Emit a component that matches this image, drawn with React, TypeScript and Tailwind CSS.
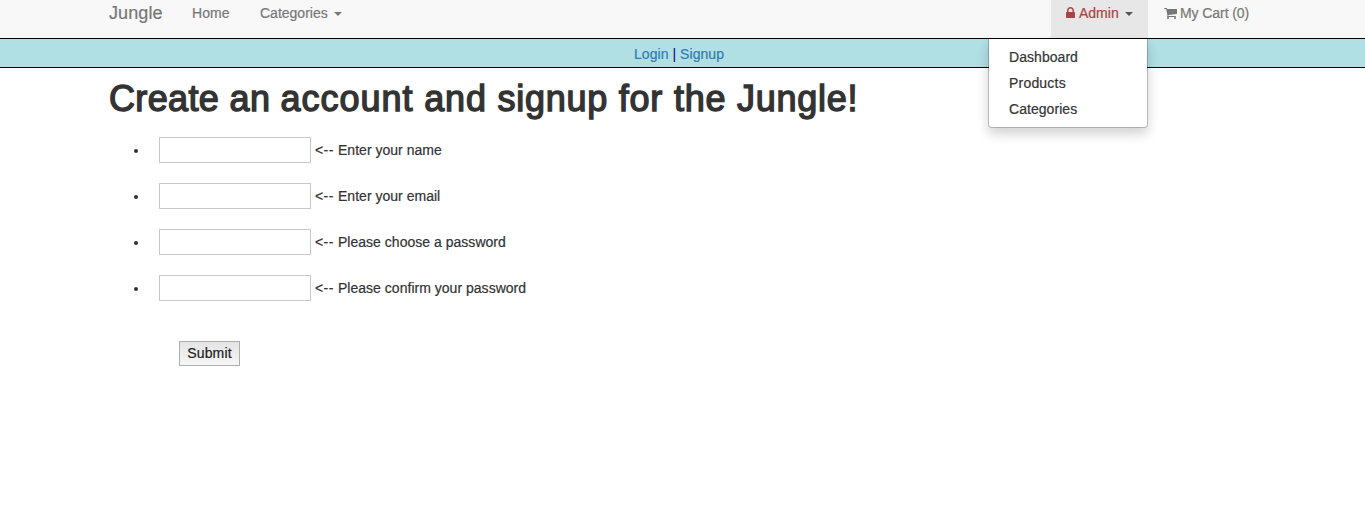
import React from 'react';

function Caret() {
  return (
    <span className="ml-[6px] mt-[2px] block h-0 w-0 border-x-4 border-t-4 border-x-transparent border-t-current" />
  );
}

function LockIcon() {
  return (
    <svg viewBox="320 0 1152 1792" className="mr-[3px] h-[14px] w-[9px]" fill="currentColor" aria-hidden="true">
      <path d="M640 768h512v-192q0-106-75-181t-181-75-181 75-75 181v192zm832 96v576q0 40-28 68t-68 28h-960q-40 0-68-28t-28-68v-576q0-40 28-68t68-28h32v-192q0-184 132-316t316-132 316 132 132 316v192h32q40 0 68 28t28 68z" />
    </svg>
  );
}

function CartIcon() {
  return (
    <svg viewBox="64 0 1664 1792" className="mr-[4px] h-[14px] w-[13px]" fill="currentColor" aria-hidden="true">
      <path d="M704 1536q0 52-38 90t-90 38-90-38-38-90 38-90 90-38 90 38 38 90zm896 0q0 52-38 90t-90 38-90-38-38-90 38-90 90-38 90 38 38 90zm128-1088v512q0 24-16.5 42.5t-40.5 21.5l-1044 122q13 60 13 70 0 16-24 64h920q26 0 45 19t19 45-19 45-45 19h-1024q-26 0-45-19t-19-45q0-11 8-31.5t16-36 21.5-40 15.5-29.5l-177-823h-204q-26 0-45-19t-19-45 19-45 45-19h256q16 0 28.5 6.5t19.5 15.5 13 24.5 8 26 5.5 29.5 4.5 26h1201q26 0 45 19t19 45z" />
    </svg>
  );
}

const fields = [
  { label: 'Enter your name', type: 'text' },
  { label: 'Enter your email', type: 'text' },
  { label: 'Please choose a password', type: 'password' },
  { label: 'Please confirm your password', type: 'password' },
];

export default function App() {
  return (
    <div className="min-h-[515px] bg-white font-['Liberation_Sans',Arial,sans-serif] text-[14px] leading-5 text-[#333]">
      <nav className="flex h-[39px] border-b border-black bg-[#f8f8f8] pl-[108px] text-[#777] [-webkit-text-stroke:0.2px]">
        <a className="mt-[3px] w-[84px] pl-px text-[18px] tracking-[0.1px]">Jungle</a>
        <a className="mt-[3px] w-[68px] tracking-[0.1px]">Home</a>
        <a className="mt-[3px] flex h-5 items-center">
          Categories
          <Caret />
        </a>
        <div className="relative ml-auto h-[38px] w-[97px] bg-[#e7e7e7] pl-[15px] pt-[3px]">
          <a className="flex h-5 items-center text-[#a94442]">
            <LockIcon />
            <span className="ml-px">Admin</span>
            <span className="text-[#555]">
              <Caret />
            </span>
          </a>
          <ul className="absolute right-0 top-[39px] z-10 h-[89px] w-[160px] rounded-b-[4px] border border-t-0 border-black/20 bg-white bg-clip-padding pl-[20px] pt-[5px] leading-[26px] text-[#333] shadow-[0_6px_12px_rgba(0,0,0,0.175)]">
            <li className="tracking-[0.05px]">Dashboard</li>
            <li className="tracking-[0.2px]">Products</li>
            <li className="tracking-[0.05px]">Categories</li>
          </ul>
        </div>
        <a className="mr-[101px] mt-[3px] flex h-5 w-[116px] items-center pl-[16px] tracking-[-0.08px]">
          <CartIcon />
          <span className="-ml-px">My Cart (0)</span>
        </a>
      </nav>
      <div className="h-[29px] border-b border-black bg-[#b0dfe4] pl-[634px] pt-[5px] tracking-[0.05px] text-[#000080]">
        <a className="text-[#337ab7] [-webkit-text-stroke:0.2px]">Login</a> |{' '}
        <a className="text-[#337ab7] [-webkit-text-stroke:0.2px]">Signup</a>
      </div>
      <main className="pl-[108px]">
        <h1 className="-mb-px pl-px pt-[11px] text-[36px] leading-[40px] tracking-[0.71px] [-webkit-text-stroke:1.4px_#333]">
          <span className="tracking-[0.35px]">Create an </span>
          <span className="tracking-[0.95px]">account </span>
          <span className="tracking-[0.76px]">and signup for the Jungle!</span>
        </h1>
        <form>
          <ul className="mt-[19px] flex flex-col gap-5">
            {fields.map((f) => (
              <li key={f.label} className="flex h-[26px] items-center">
                <span className="ml-[26px] mr-[21px] mt-[2px] h-1 w-1 rounded-full bg-[#333]" />
                <input type={f.type} aria-label={f.label} className="h-[26px] w-[152px] border border-[#c8c8c8] bg-white" />
                <span className="ml-1 flex [-webkit-text-stroke:0.2px]">
                  <span className="w-[23px] tracking-[0.4px]">{'<--'}</span>
                  <span className="tracking-[0.02px]">{f.label}</span>
                </span>
              </li>
            ))}
          </ul>
          <button
            type="button"
            className="ml-[71px] mt-10 block h-[25px] w-[61px] border border-[#adadad] bg-linear-to-b from-[#e4e4e4] to-[#f6f6f6] text-[14px] leading-[23px] tracking-[0.15px] text-[#222] [-webkit-text-stroke:0.2px]"
          >
            Submit
          </button>
        </form>
      </main>
    </div>
  );
}
